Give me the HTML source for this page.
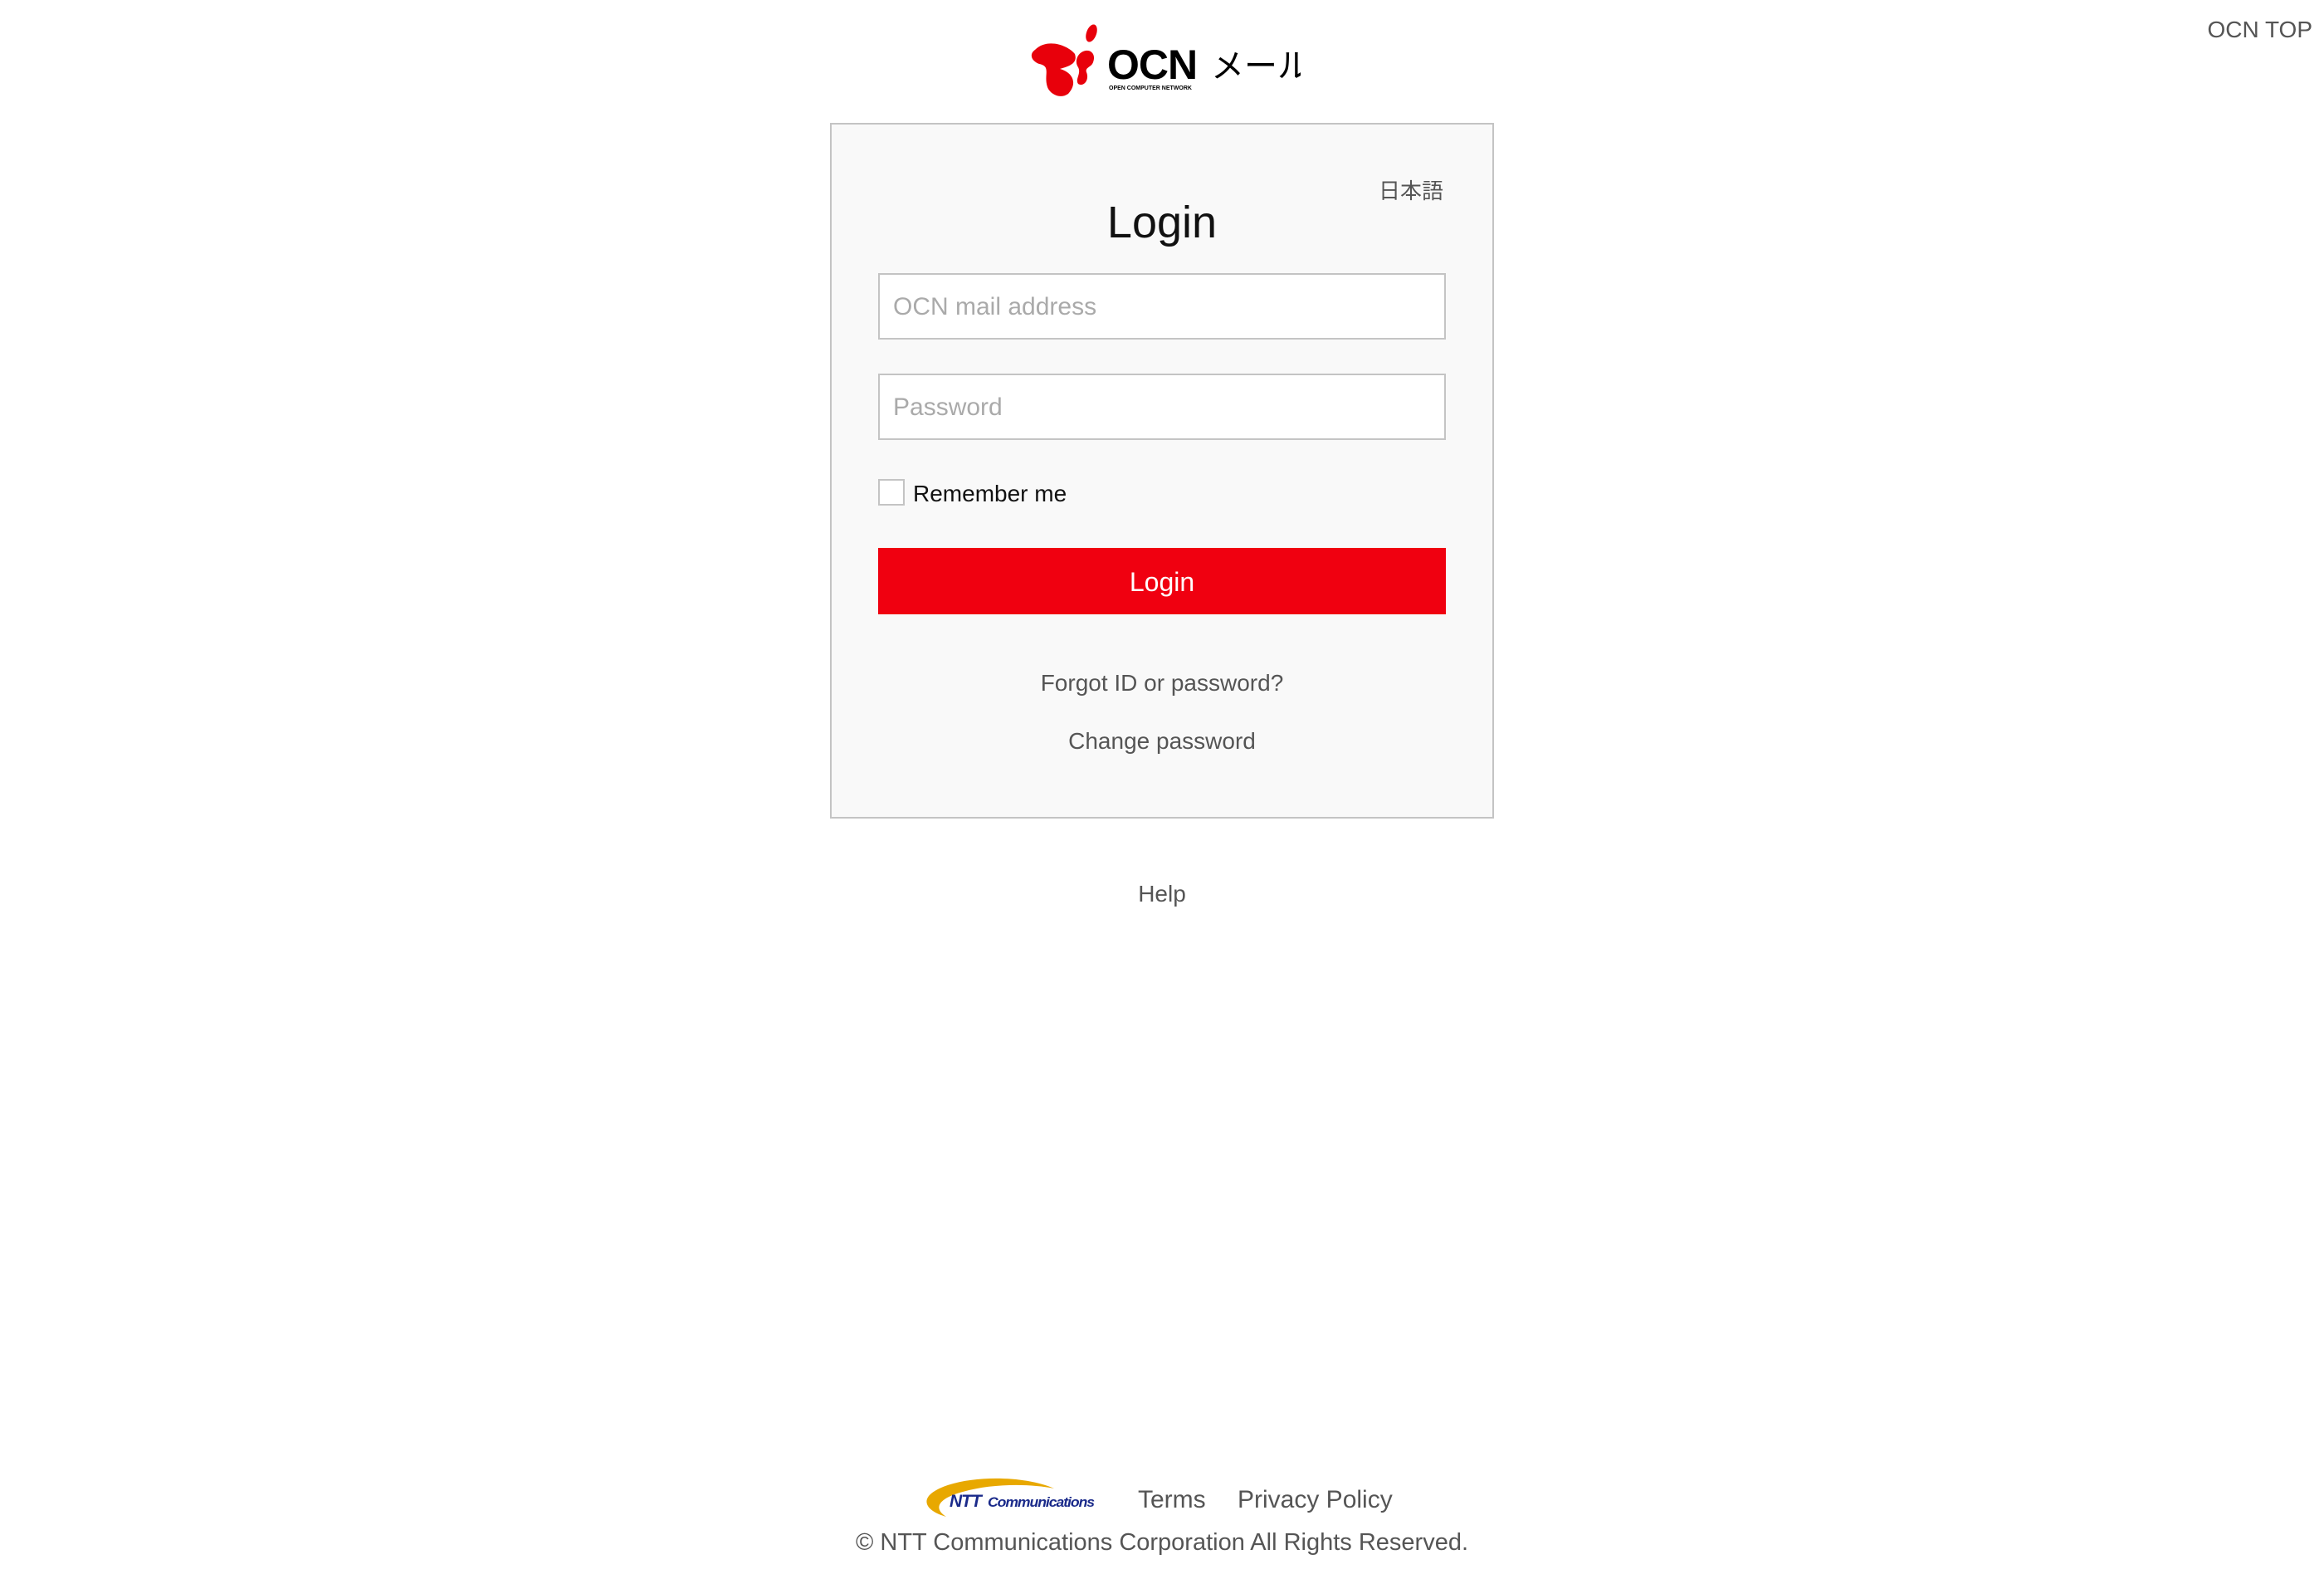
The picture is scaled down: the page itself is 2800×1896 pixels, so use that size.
<!DOCTYPE html>
<html><head><meta charset="utf-8"><style>
*{margin:0;padding:0;box-sizing:border-box}
body{width:2800px;height:1896px;background:#fff;font-family:"Liberation Sans","Noto Sans CJK JP",sans-serif;position:relative;overflow:hidden;color:#555}
.abs{position:absolute}
.card{left:1000px;top:148px;width:800px;height:838px;background:#f9f9f9;border:2px solid #c4c4c4}
.inp{left:1058px;width:684px;height:80px;background:#fff;border:2px solid #c4c4c4;font-size:30px;color:#aaa;padding-left:16px;line-height:78px}
.c{text-align:center;width:2800px;left:0}
</style></head><body>
<div class="abs" style="right:14px;top:20px;font-size:28px;color:#555">OCN TOP</div>
<svg class="abs" style="left:1237px;top:25px" width="330" height="95" viewBox="0 0 330 95">
<ellipse cx="78" cy="15" rx="6" ry="11" fill="#e8000b" transform="rotate(20 78 15)"/>
<path d="M10 35 C25 20 50 30 58 40 C62 52 50 55 40 58 C55 62 62 75 50 88 C40 95 28 88 25 80 C20 65 30 55 15 52 C5 48 3 40 10 35Z" fill="#e8000b"/>
<path d="M66 38 C76 32 84 40 80 50 C78 56 70 56 72 62 C76 72 68 80 62 76 C58 70 66 64 62 56 C58 50 60 42 66 38Z" fill="#e8000b"/>
<text x="97" y="70" font-family="Liberation Sans" font-weight="bold" font-size="50" fill="#000" letter-spacing="-1">OCN</text>
<text x="99" y="83" font-family="Liberation Sans" font-weight="bold" font-size="7" fill="#000">OPEN COMPUTER NETWORK</text>
<text x="222" y="68" font-family="Noto Sans CJK JP" font-size="40" fill="#000">メール</text>
</svg>
<div class="abs card"></div>
<div class="abs" style="left:1661px;top:210px;font-size:26px;color:#555">日本語</div>
<div class="abs c" style="top:237px;font-size:54px;color:#111">Login</div>
<div class="abs inp" style="top:329px">OCN mail address</div>
<div class="abs inp" style="top:450px">Password</div>
<div class="abs" style="left:1058px;top:577px;width:32px;height:32px;background:#fff;border:2px solid #c4c4c4"></div>
<div class="abs" style="left:1100px;top:579px;font-size:28px;color:#111">Remember me</div>
<div class="abs" style="left:1058px;top:660px;width:684px;height:80px;background:#f00010;color:#fff;font-size:32px;text-align:center;line-height:82px">Login</div>
<div class="abs c" style="top:807px;font-size:28px">Forgot ID or password?</div>
<div class="abs c" style="top:877px;font-size:28px">Change password</div>
<div class="abs c" style="top:1061px;font-size:28px">Help</div>
<svg class="abs" style="left:1110px;top:1777px" width="215" height="55" viewBox="0 0 215 55">
<path d="M160 16 C120 -2 40 0 12 22 C0 32 8 44 30 50 C14 40 20 28 50 20 C85 10 130 10 160 16Z" fill="#e8a800"/>
<text x="34" y="38" font-family="Liberation Sans" font-weight="bold" font-style="italic" font-size="21" fill="#1a2a8a" letter-spacing="-1">NTT</text>
<text x="80" y="38" font-family="Liberation Sans" font-weight="bold" font-style="italic" font-size="17" fill="#1a2a8a" letter-spacing="-1" textLength="128" lengthAdjust="spacingAndGlyphs">Communications</text>
</svg>
<div class="abs" style="left:1371px;top:1790px;font-size:30px">Terms</div>
<div class="abs" style="left:1491px;top:1790px;font-size:30px">Privacy Policy</div>
<div class="abs c" style="top:1842px;font-size:29px">© NTT Communications Corporation All Rights Reserved.</div>
</body></html>
